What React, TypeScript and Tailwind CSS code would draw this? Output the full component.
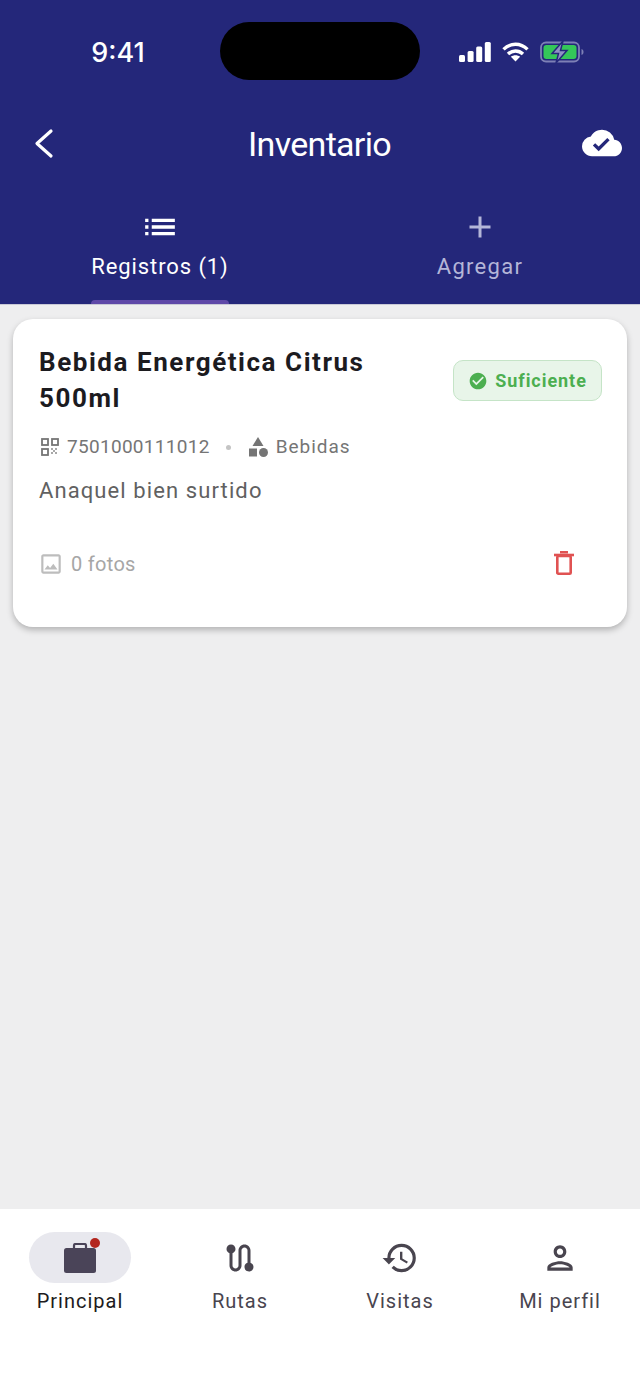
import {
  MdAdd,
  MdCategory,
  MdCheckCircle,
  MdCloudDone,
  MdHistory,
  MdList,
  MdOutlineImage,
  MdOutlinePerson,
  MdRoute,
} from "react-icons/md";

function StatusIcons() {
  return (
    <div className="flex items-center gap-[11px] pl-[39px] pt-[2px]">
      <svg width="32" height="20" viewBox="0 0 32 20" fill="#fff">
        <rect x="0" y="13" width="6" height="7" rx="1.5" />
        <rect x="8.6" y="9" width="6" height="11" rx="1.5" />
        <rect x="17.2" y="4.5" width="6" height="15.5" rx="1.5" />
        <rect x="25.8" y="0" width="6" height="20" rx="1.5" />
      </svg>
      <svg width="27" height="20" viewBox="0 0 27 20" fill="none" stroke="#fff" strokeWidth="3.4">
        <path d="M1.5 7.4C8.5 .6 18.5 .6 25.5 7.4" />
        <path d="M6 12c4.400-4 10.600-4 15 0" />
        <path d="M13.500 19.500l-4.600-4.800c2.700-2 6.500-2 9.200 0z" fill="#fff" stroke="none" />
      </svg>
      <svg width="44" height="22" viewBox="0 0 44 22" fill="none">
        <rect x="1" y="1.500" width="38" height="19" rx="5" stroke="#7d80b5" strokeWidth="1.800" />
        <rect x="3.500" y="4" width="33" height="14" rx="3" fill="#34c759" />
        <path d="M41.500 8c1.300.4 2 1.500 2 3s-.7 2.600-2 3z" fill="#7d80b5" />
        <path d="M23 0 12 12.500h6.500L16 22l11-12.500h-6.500z" fill="#8f92c4" stroke="#24277a" strokeWidth="1.500" />
      </svg>
    </div>
  );
}

function QrIcon() {
  return (
    <svg width="18" height="18" viewBox="0 0 18 18" fill="none" stroke="#757575" strokeWidth="1.800" className="ml-[2px] shrink-0">
      <rect x="1" y="1" width="6" height="6" />
      <rect x="11" y="1" width="6" height="6" />
      <rect x="1" y="11" width="6" height="6" />
      <path d="M10 10h2v2h-2zM14 10h2v2h-2zM12 12h2v2h-2zM10 14h2v2h-2zM14 14h2v2h-2z" fill="#a8a8a8" stroke="none" />
    </svg>
  );
}

function TrashIcon() {
  return (
    <svg width="20" height="24" viewBox="0 0 20 24" fill="none" stroke="#e05252" strokeWidth="2.600" className="mr-[28px] mb-[2px]">
      <path d="M0 4h20" />
      <path d="M6 1.200h8" />
      <rect x="3.300" y="5" width="13.400" height="17.700" rx="1" />
    </svg>
  );
}

function BriefcaseIcon() {
  return (
    <svg width="32" height="30" viewBox="0 0 32 30" fill="none">
      <rect x="0" y="5" width="32" height="25" rx="2.500" fill="#4a4458" />
      <path d="M10 6V2.500c0-.8.700-1.500 1.500-1.500h9c.8 0 1.500.7 1.500 1.500V6" stroke="#4a4458" strokeWidth="2.200" />
    </svg>
  );
}

function NavItem({
  icon,
  label,
  active = false,
}: {
  icon: React.ReactNode;
  label: string;
  active?: boolean;
}) {
  return (
    <div className="flex flex-1 flex-col items-center">
      <div
        className={`relative flex h-[51px] w-[102px] items-center justify-center rounded-full ${
          active ? "bg-[#e8e8ee]" : ""
        }`}
      >
        {icon}
        {active && <span className="absolute left-[61px] top-[6px] h-[10px] w-[10px] rounded-full bg-[#b3261e]" />}
      </div>
      <span
        className={`mt-[4px] text-[20px] leading-[28px] tracking-[1px] ${
          active ? "text-[#1d1b20]" : "text-[#49454f]"
        }`}
      >
        {label}
      </span>
    </div>
  );
}

export default function App() {
  return (
    <div className="flex h-[1391px] w-[640px] flex-col overflow-hidden bg-[#eeeeef] font-['Roboto',sans-serif]">
      <header className="flex h-[304px] shrink-0 flex-col bg-[#24277a] text-white">
        <div className="grid grid-cols-[220px_200px_220px] items-center pt-[22px]">
          <span className="pl-[16px] pt-[4px] text-center font-['Inter',sans-serif] text-[27px] font-medium leading-[54px]">
            9:41
          </span>
          <div className="h-[58px] rounded-[30px] bg-black" />
          <StatusIcons />
        </div>

        <div className="mt-[33px] flex h-[64px] items-center justify-between pl-[33px] pr-[18px]">
          <svg width="24" height="32" viewBox="0 0 24 32" fill="none" stroke="#fff" strokeWidth="3.200" strokeLinecap="round" strokeLinejoin="round" className="mb-[3px]">
            <path d="M18 3 4 15.500 18 28" />
          </svg>
          <h1 className="pb-[2px] text-[34px] font-normal leading-[40px] tracking-[-0.7px]">Inventario</h1>
          <MdCloudDone className="mb-[5px] h-[40px] w-[40px]" />
        </div>

        <div className="mt-[32px] flex flex-1">
          <div className="flex flex-1 flex-col items-center">
            <MdList className="h-[36px] w-[36px] scale-[1.1]" />
            <span className="mt-[7px] text-[22px] leading-[30px] tracking-[0.9px]">Registros (1)</span>
            <div className="mt-auto h-[4px] w-[138px] rounded-t-[4px] bg-[#5e48a8]" />
          </div>
          <div className="flex flex-1 flex-col items-center text-[#b4b6d8]">
            <MdAdd className="h-[36px] w-[36px]" />
            <span className="mt-[7px] text-[22px] leading-[30px] tracking-[1.3px]">Agregar</span>
          </div>
        </div>
      </header>
      <div className="h-[1px] shrink-0 bg-[#c9c9d6]" />

      <main className="flex-1 px-[13px] pt-[14px]">
        <article className="h-[308px] rounded-[20px] bg-white pl-[26px] pr-[25px] pt-[25px] shadow-[0_3px_6px_rgba(0,0,0,0.25)]">
          <div className="flex items-start justify-between">
            <h2 className="w-[370px] text-[26px] font-bold leading-[36px] tracking-[1.55px] text-[#1c1b1f]">
              Bebida Energética Citrus 500ml
            </h2>
            <div className="mt-[16px] flex h-[41px] w-[149px] items-center justify-center gap-[7px] rounded-[10px] border-[1.5px] border-[#c5e4c7] bg-[#e8f5e9] text-[#4caf50]">
              <MdCheckCircle className="h-[20px] w-[20px]" />
              <span className="text-[18px] font-bold leading-[24px] tracking-[0.95px]">Suficiente</span>
            </div>
          </div>

          <div className="mt-[17px] flex items-center text-[19px] leading-[28px] text-[#757575]">
            <QrIcon />
            <span className="ml-[8px] tracking-[0.3px]">7501000111012</span>
            <span className="ml-[16px] h-[5px] w-[5px] rounded-full bg-[#c4c4c4]" />
            <MdCategory className="ml-[15px] h-[24px] w-[24px]" />
            <span className="ml-[6px] tracking-[0.95px]">Bebidas</span>
          </div>

          <p className="mt-[15px] text-[22px] leading-[30px] tracking-[1.1px] text-[#616161]">Anaquel bien surtido</p>

          <div className="mt-[44px] flex items-center justify-between">
            <div className="-ml-[1px] flex items-center text-[#a6a6a6]">
              <MdOutlineImage className="h-[26px] w-[26px] text-[#bdbdbd]" />
              <span className="ml-[7px] text-[20px] leading-[28px] tracking-[0.3px]">0 fotos</span>
            </div>
            <TrashIcon />
          </div>
        </article>
      </main>

      <nav className="flex h-[182px] shrink-0 bg-white pt-[23px]">
        <NavItem active label="Principal" icon={<BriefcaseIcon />} />
        <NavItem label="Rutas" icon={<MdRoute className="h-[36px] w-[36px] text-[#49454f]" />} />
        <NavItem label="Visitas" icon={<MdHistory className="h-[38px] w-[38px] text-[#49454f]" />} />
        <NavItem label="Mi perfil" icon={<MdOutlinePerson className="h-[38px] w-[38px] text-[#49454f]" />} />
      </nav>
    </div>
  );
}
